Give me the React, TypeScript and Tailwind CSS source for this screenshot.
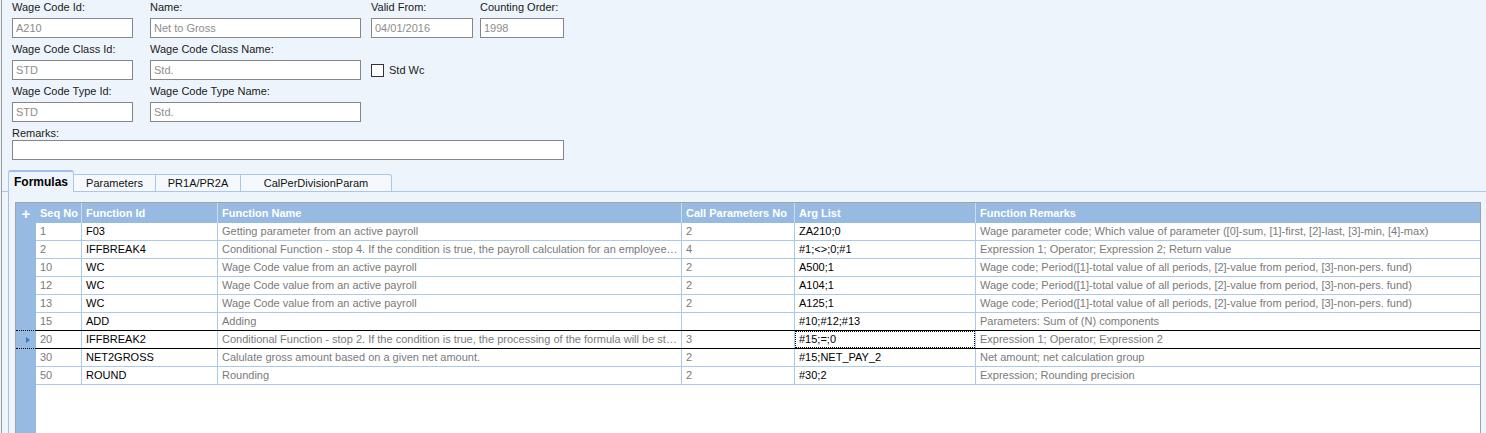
import React from 'react';

interface FormulaRow {
  seq: string;
  id: string;
  name: string;
  calls: string;
  args: string;
  remarks: string;
}

const rows: FormulaRow[] = [
  { seq: '1', id: 'F03', name: 'Getting parameter from an active payroll', calls: '2', args: 'ZA210;0', remarks: 'Wage parameter code; Which value of parameter ([0]-sum, [1]-first, [2]-last, [3]-min, [4]-max)' },
  { seq: '2', id: 'IFFBREAK4', name: 'Conditional Function - stop 4. If the condition is true, the payroll calculation for an employee…', calls: '4', args: '#1;<>;0;#1', remarks: 'Expression 1; Operator; Expression 2; Return value' },
  { seq: '10', id: 'WC', name: 'Wage Code value from an active payroll', calls: '2', args: 'A500;1', remarks: 'Wage code; Period([1]-total value of all periods, [2]-value from period, [3]-non-pers. fund)' },
  { seq: '12', id: 'WC', name: 'Wage Code value from an active payroll', calls: '2', args: 'A104;1', remarks: 'Wage code; Period([1]-total value of all periods, [2]-value from period, [3]-non-pers. fund)' },
  { seq: '13', id: 'WC', name: 'Wage Code value from an active payroll', calls: '2', args: 'A125;1', remarks: 'Wage code; Period([1]-total value of all periods, [2]-value from period, [3]-non-pers. fund)' },
  { seq: '15', id: 'ADD', name: 'Adding', calls: '', args: '#10;#12;#13', remarks: 'Parameters: Sum of (N) components' },
  { seq: '20', id: 'IFFBREAK2', name: 'Conditional Function - stop 2. If the condition is true, the processing of the formula will be st…', calls: '3', args: '#15;=;0', remarks: 'Expression 1; Operator; Expression 2' },
  { seq: '30', id: 'NET2GROSS', name: 'Calulate gross amount based on a given net amount.', calls: '2', args: '#15;NET_PAY_2', remarks: 'Net amount; net calculation group' },
  { seq: '50', id: 'ROUND', name: 'Rounding', calls: '2', args: '#30;2', remarks: 'Expression; Rounding precision' },
];

const FOCUSED = 6;

const Field = ({ label, value, width }: { label: string; value: string; width: string }) => (
  <div className={`flex flex-col ${width}`}>
    <div className="h-[18px] leading-[14px] text-[#1a1a1a] whitespace-nowrap">{label}</div>
    <div className="h-[20px] border border-[#868686] bg-white pl-[3px] leading-[18px] text-[#8d8d8d]">{value}</div>
  </div>
);

const App: React.FC = () => {
  return (
    <div
      className="flex h-[433px] w-[1486px] overflow-hidden bg-[#eef4fc] text-[11px]"
      style={{ fontFamily: '"Liberation Sans", Arial, sans-serif' }}
    >
      <div className="ml-[1px] flex flex-1 flex-col border-l border-[#9a9a9a]">
        {/* header form */}
        <div className="flex flex-col pl-[10px]">
          <div className="flex">
            <Field label="Wage Code Id:" value="A210" width="w-[121px]" />
            <div className="ml-[17px]"><Field label="Name:" value="Net to Gross" width="w-[211px]" /></div>
            <div className="ml-[10px]"><Field label="Valid From:" value="04/01/2016" width="w-[102px]" /></div>
            <div className="ml-[7px]"><Field label="Counting Order:" value="1998" width="w-[84px]" /></div>
          </div>
          <div className="mt-[4px] flex">
            <Field label="Wage Code Class Id:" value="STD" width="w-[121px]" />
            <div className="ml-[17px]"><Field label="Wage Code Class Name:" value="Std." width="w-[211px]" /></div>
            <div className="ml-[10px] mt-[18px] flex h-[20px] items-center gap-[5px]">
              <div className="h-[13px] w-[13px] border border-[#333] bg-white" />
              <span className="text-[#1a1a1a]">Std Wc</span>
            </div>
          </div>
          <div className="mt-[4px] flex">
            <Field label="Wage Code Type Id:" value="STD" width="w-[121px]" />
            <div className="ml-[17px]"><Field label="Wage Code Type Name:" value="Std." width="w-[211px]" /></div>
          </div>
          <div className="mt-[4px] flex w-[552px] flex-col">
            <div className="h-[14px] leading-[14px] text-[#1a1a1a]">Remarks:</div>
            <div className="h-[20px] border border-[#868686] bg-white" />
          </div>
        </div>

        {/* tabs */}
        <div className="mt-[10px] flex h-[22px] items-end border-b border-[#a9c8e8] pl-[6px]">
          <div className="relative -mb-px h-[22px] w-[66px] rounded-t-[3px] border border-b-0 border-t-2 border-[#a9c8e8] border-t-[#9ec2ea] bg-[#eef4fc] pl-[5px] pt-[3px] text-[12px] font-bold leading-[14px] text-black">
            Formulas
          </div>
          <div className="flex h-[17px] w-[82px] items-center justify-center border border-b-0 border-l-0 border-[#a9c8e8] bg-[#f5f9fd] text-[#111]">
            Parameters
          </div>
          <div className="flex h-[17px] w-[85px] items-center justify-center border border-b-0 border-l-0 border-[#a9c8e8] bg-[#f5f9fd] text-[#111]">
            PR1A/PR2A
          </div>
          <div className="flex h-[17px] w-[151px] items-center justify-center rounded-tr-[3px] border border-b-0 border-l-0 border-[#a9c8e8] bg-[#f5f9fd] text-[#111]">
            CalPerDivisionParam
          </div>
        </div>

        {/* tab page */}
        <div className="ml-[6px] flex flex-1 flex-col border-l border-[#a9bfd6] pl-[6px] pr-[5px] pt-[10px]">
          <div className="flex flex-1 border border-b-0 border-[#a3a3a3] bg-white">
            {/* indicator column */}
            <div className="flex w-[20px] flex-col bg-[#96bae2]">
              <div className="flex h-[20px] items-center justify-center text-[15px] font-bold leading-none text-white">+</div>
              {rows.map((r, i) => (
                <div
                  key={r.seq}
                  className={`relative h-[18px] ${i === FOCUSED - 1 || i === FOCUSED ? 'border-b border-dotted border-black' : ''}`}
                >
                  {i === FOCUSED && (
                    <svg className="absolute left-[10px] top-[6px]" width="4" height="6" viewBox="0 0 4 6">
                      <path d="M0 0 L4 3 L0 6 Z" fill="#3b78c7" />
                    </svg>
                  )}
                </div>
              ))}
            </div>

            {/* table */}
            <div className="flex flex-1 flex-col">
              <div className="flex h-[20px] bg-[#96bae2] font-bold leading-[20px] text-white">
                <div className="w-[46px] border-r border-[#c9dcf1] pl-[4px]">Seq No</div>
                <div className="w-[136px] border-r border-[#c9dcf1] pl-[4px]">Function Id</div>
                <div className="w-[464px] border-r border-[#c9dcf1] pl-[4px]">Function Name</div>
                <div className="w-[113px] border-r border-[#c9dcf1] pl-[4px] whitespace-nowrap">Call Parameters No</div>
                <div className="w-[181px] border-r border-[#c9dcf1] pl-[4px]">Arg List</div>
                <div className="flex-1 pl-[4px]">Function Remarks</div>
              </div>
              {rows.map((r, i) => (
                <div
                  key={r.seq}
                  className={`flex h-[18px] border-b leading-[17px] ${i === FOCUSED - 1 || i === FOCUSED ? 'border-black' : 'border-[#abcaeb]'}`}
                >
                  <div className="w-[46px] border-r border-[#abcaeb] pl-[4px] text-[#7a7a7a]">{r.seq}</div>
                  <div className="w-[136px] border-r border-[#abcaeb] pl-[4px] text-black">{r.id}</div>
                  <div className="w-[464px] overflow-hidden whitespace-nowrap border-r border-[#abcaeb] pl-[4px] text-[#7a7a7a]">{r.name}</div>
                  <div className="w-[113px] border-r border-[#abcaeb] pl-[4px] text-[#7a7a7a]">{r.calls}</div>
                  <div className="w-[181px] border-r border-[#abcaeb] text-black">
                    <div className={`h-full pl-[3px] ${i === FOCUSED ? 'border border-dotted border-black leading-[15px]' : 'pl-[4px]'}`}>
                      {r.args}
                    </div>
                  </div>
                  <div className="flex-1 overflow-hidden whitespace-nowrap pl-[4px] text-[#7a7a7a]">{r.remarks}</div>
                </div>
              ))}
            </div>
          </div>
        </div>
      </div>
    </div>
  );
};

export default App;
